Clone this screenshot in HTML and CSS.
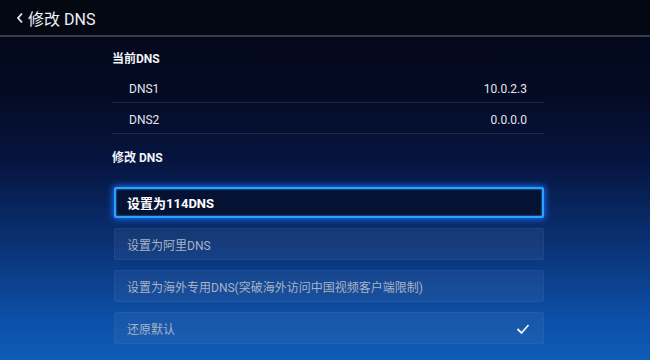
FILE: index.html
```html
<!DOCTYPE html>
<html lang="zh-CN">
<head>
    <meta charset="UTF-8">
    <title>修改 DNS</title>
    <link rel="stylesheet" href="styles.css">
</head>
<body>
    <div class="header">
        <span class="back">
            <svg width="8" height="12" viewBox="0 0 8 12"><polyline points="6,1.5 2,6 6,10.5" fill="none" stroke="#e8ecf2" stroke-width="1.8"/></svg>
        </span>
        <span class="title">修改 DNS</span>
    </div>

    <div class="container">
        <div class="section-title">当前DNS</div>
        <div class="row"><span>DNS1</span><span>10.0.2.3</span></div>
        <div class="row"><span>DNS2</span><span>0.0.0.0</span></div>

        <div class="section-title second">修改 DNS</div>
        <div class="options">
            <div class="option focused">设置为114DNS</div>
            <div class="option">设置为阿里DNS</div>
            <div class="option">设置为海外专用DNS(突破海外访问中国视频客户端限制)</div>
            <div class="option">还原默认
                <svg class="check" width="14" height="12" viewBox="0 0 14 12"><polyline points="1.5,6 5.5,10 12.5,2" fill="none" stroke="#eef2f8" stroke-width="1.8"/></svg>
            </div>
        </div>
    </div>
</body>
</html>
```

FILE: styles.css
```css
* { margin: 0; padding: 0; box-sizing: border-box; }
body {
    font-family: Roboto, "Noto Sans CJK SC", sans-serif;
    width: 650px; height: 360px; overflow: hidden;
    color: #e6eaf0;
    background: linear-gradient(180deg, #03071a 0%, #040a22 25%, #061540 45%, #0a3276 68%, #0c4fa6 88%, #0d5cb8 100%);
}
.header {
    height: 37px; display: flex; align-items: center; padding-left: 16px;
    background: #040813; border-bottom: 2px solid #363d4b;
}
.back { display: flex; margin-right: 4px; margin-top: 1px; }
.title { font-size: 16px; color: #eef1f5; }
.container { width: 432px; margin-left: 112px; padding-top: 13px; }
.section-title { font-size: 12px; font-weight: bold; color: #f2f4f8; line-height: 18px; height: 22px; }
.section-title.second { margin-top: 15px; margin-bottom: 20px; height: 18px; }
.row {
    display: flex; justify-content: space-between;
    height: 31px; padding: 4px 17px 0; line-height: 26px;
    font-size: 12px; color: #e2e6ec;
    border-bottom: 1px solid rgba(120, 140, 175, 0.22);
}
.options { display: flex; flex-direction: column; gap: 10px; padding-left: 2px; }
.option {
    height: 32px; display: flex; align-items: center; justify-content: space-between;
    padding: 0 13px 0 12px; font-size: 12px; color: #a9b3c4;
    background: rgba(140, 160, 200, 0.1); border: 1px solid rgba(150, 170, 210, 0.08);
    border-radius: 2px;
}
.option.focused {
    height: 31px;
    background: #061234; border: 2px solid #2ba2ff; color: #ffffff;
    font-size: 13px; font-weight: bold; padding-left: 11px;
    box-shadow: 0 0 6px 1px #1670ff, 0 0 2px #3db0ff inset;
}
.check { margin-top: 1px; }
```
